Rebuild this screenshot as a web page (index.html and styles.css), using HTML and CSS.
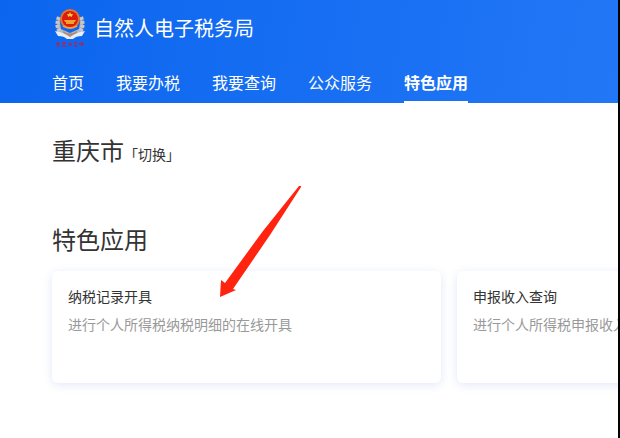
FILE: index.html
```html
<!DOCTYPE html>
<html lang="zh-CN">
<head>
    <meta charset="UTF-8">
    <meta name="viewport" content="width=device-width, initial-scale=1.0">
    <title>自然人电子税务局</title>
    <link rel="stylesheet" href="styles.css">
</head>
<body>

    <header class="header">
        <div class="brand">
            <svg class="logo" viewBox="0 0 32 42" aria-hidden="true">
                <path d="M5 10 Q0 20 6 26 L16 31 L26 26 Q32 20 27 10 L25 22 L16 26 L7 22 Z" fill="#a9b4c4"/>
                <path d="M5 10 Q1 20 7 26 M27 10 Q31 20 25 26" fill="none" stroke="#c9c6c4" stroke-width="4" stroke-dasharray="3 1"/>
                <path d="M9 24 Q16 29 23 24 L22 29 Q16 31 10 29 Z" fill="#b08a78"/>
                <path d="M1 24 Q9 25 16 30 Q23 25 31 24 L28 29 Q22 29 19 32 L13 32 Q10 29 4 29 Z" fill="#e8eef5"/>
                <circle cx="16" cy="12" r="10" fill="#e8752c"/>
                <circle cx="16" cy="12" r="8" fill="#dd1c10"/>
                <path d="M16 5 L17 7 L19 7 L18 9 L18 10 L16 9 L14 10 L14 9 L13 7 L15 7 Z" fill="#ffc53a"/>
                <path d="M10 13 H22 L21 15 H20 V17 H12 V15 H11 Z" fill="#f5a02c"/>
                <path d="M9 19 Q16 23 23 19" fill="none" stroke="#f0a040" stroke-width="2"/>
                <path d="M2 37 H6 M4 35 V40 M8 36 H12 M8 39 H12 M14 37 H18 M16 36 V39 M20 36 H23 M20 39 H23 M25 37 H30 M28 35 V39" fill="none" stroke="#8a3478" stroke-width="2"/>
            </svg>
            <h1 class="site-name">自然人电子税务局</h1>
        </div>
        <nav class="nav">
            <a href="#">首页</a>
            <a href="#">我要办税</a>
            <a href="#">我要查询</a>
            <a href="#">公众服务</a>
            <a href="#" class="active">特色应用</a>
        </nav>
    </header>

    <main class="content">
        <div class="city">
            <span class="city-name">重庆市</span><a href="#" class="switch">「切换」</a>
        </div>

        <section class="apps">
            <h2 class="apps-title">特色应用</h2>
            <div class="cards">
                <a href="#" class="card">
                    <h3>纳税记录开具</h3>
                    <p>进行个人所得税纳税明细的在线开具</p>
                </a>
                <a href="#" class="card">
                    <h3>申报收入查询</h3>
                    <p>进行个人所得税申报收入查询</p>
                </a>
            </div>
            <svg class="arrow" viewBox="0 0 84 114" aria-hidden="true">
                <path d="M80 1 L82 1 L82 2 L51 50 L14 104 L17 105 L1 112 L2 95 L6 98 L44 46 Z" fill="#ff2310"/>
            </svg>
        </section>
    </main>

</body>
</html>
```

FILE: styles.css
```css
body {
    font-family: "Noto Sans CJK SC", sans-serif;
    margin: 0;
    min-height: 100vh;
    box-sizing: border-box;
    border-right: 2px solid #000;
    background-color: #fff;
    color: #333;
    overflow: hidden;
}
h1, h2, h3, p {
    margin: 0;
    font-weight: 400;
}
a {
    color: inherit;
    text-decoration: none;
}
.header {
    padding: 4px 52px 0;
    background: linear-gradient(100deg, #0b65ee, #2277f6);
    color: #fff;
}
.brand {
    display: flex;
    align-items: center;
    gap: 8px;
    height: 48px;
    padding-left: 2px;
}
.logo {
    width: 32px;
    height: 42px;
}
.site-name {
    font-size: 20px;
    line-height: 28px;
}
.nav {
    display: flex;
    gap: 32px;
    padding-top: 11px;
    font-size: 16px;
    line-height: 38px;
    white-space: nowrap;
}
.nav a {
    border-bottom: 2px solid transparent;
}
.nav .active {
    font-weight: 700;
    border-bottom-color: #fff;
}
.content {
    padding: 31px 0 48px 52px;
}
.city {
    font-size: 24px;
    line-height: 32px;
}
.switch {
    font-size: 14px;
    line-height: 14px;
}
.apps {
    position: relative;
    padding-top: 57px;
}
.apps-title {
    font-size: 24px;
    line-height: 32px;
}
.cards {
    display: grid;
    grid-auto-flow: column;
    grid-auto-columns: 389px;
    gap: 16px;
    margin-top: 16px;
}
.card {
    box-sizing: border-box;
    min-height: 112px;
    padding: 11px 16px;
    border-radius: 6px;
    box-shadow: 0 2px 10px rgba(60, 90, 210, 0.14);
    font-size: 14px;
    line-height: 28px;
    white-space: nowrap;
}
.card h3 {
    font-size: 14px;
}
.card p {
    color: #999;
}
/* pointer over the first card */
.arrow {
    position: absolute;
    top: 19px;
    left: 167px;
    width: 84px;
    height: 114px;
}
```
